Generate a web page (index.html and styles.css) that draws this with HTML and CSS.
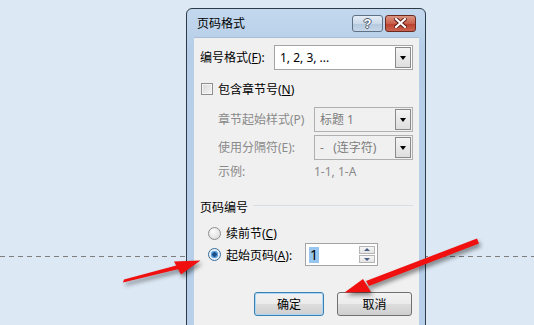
FILE: index.html
```html
<!DOCTYPE html>
<html lang="zh-CN">
<head>
  <meta charset="UTF-8" />
  <title>页码格式</title>
  <link rel="stylesheet" href="styles.css">
</head>
<body>
  <div class="desk">
    <div class="page-break"></div>

    <div class="dialog">
      <div class="titlebar">
        <span class="title">页码格式</span>
        <div class="caption-btns">
          <span class="cap-btn help">?</span>
          <span class="cap-btn close">
            <svg width="13" height="10" viewBox="0 0 13 10">
              <path d="M2 1 L11 9 M11 1 L2 9" stroke="#5a1a14" stroke-width="4" stroke-linecap="square"/>
              <path d="M2 1 L11 9 M11 1 L2 9" stroke="#fff" stroke-width="2.2" stroke-linecap="square"/>
            </svg>
          </span>
        </div>
      </div>

      <div class="panel">
        <div class="fmt-row">
          <span class="lbl">编号格式(<u>F</u>):</span>
          <div class="combo">
            <span class="combo-text">1, 2, 3, ...</span>
            <span class="drop"></span>
          </div>
        </div>

        <div class="check-row">
          <span class="checkbox"></span>
          <span>包含章节号(<u>N</u>)</span>
        </div>

        <div class="chapter">
          <span class="lbl off">章节起始样式(P)</span>
          <div class="combo off"><span class="combo-text">标题 1</span><span class="drop"></span></div>
          <span class="lbl off">使用分隔符(E):</span>
          <div class="combo off"><span class="combo-text">-&nbsp;&nbsp;&nbsp;(连字符)</span><span class="drop"></span></div>
          <span class="lbl off">示例:</span>
          <span class="lbl off sample">1-1, 1-A</span>
        </div>

        <div class="group-head">
          <span>页码编号</span>
          <span class="rule"></span>
        </div>

        <div class="radio-row">
          <span class="radio"></span>
          <span>续前节(<u>C</u>)</span>
        </div>

        <div class="radio-row start">
          <span class="radio on"></span>
          <span class="radio-lbl">起始页码(<u>A</u>):</span>
          <div class="spin">
            <span class="spin-val">1</span>
            <div class="spin-btns">
              <span class="spin-btn up"></span>
              <span class="spin-btn down"></span>
            </div>
          </div>
        </div>

        <div class="actions">
          <button class="btn default">确定</button>
          <button class="btn">取消</button>
        </div>
      </div>
    </div>

    <!-- annotation arrows drawn over the screenshot -->
    <svg class="arrows" width="534" height="325" viewBox="0 0 534 325">
      <g fill="#f01010">
        <path d="M123 282.5 L124 279.5 L180 264.5 L181 268.5 Z"/>
        <path d="M174 261.5 L200.5 260.5 L181 274.5 Z"/>
        <path d="M477 238.5 L479 243.5 L369 286 L366 281 Z"/>
        <path d="M344.5 292.5 L363 279 L371 292 Z"/>
      </g>
    </svg>
  </div>
</body>
</html>
```

FILE: styles.css
```css
body {
  margin: 0;
  background: #dce8f4;
  font-family: "Noto Sans", "Noto Sans CJK SC", sans-serif;
  font-size: 12px;
  color: #000;
}

.desk {
  position: relative;
  width: 534px;
  height: 325px;
  overflow: hidden;
}

.page-break {
  position: absolute;
  left: 0;
  right: 0;
  top: 256px;
  height: 1px;
  background: repeating-linear-gradient(to right, #7d7d7d 0 5px, transparent 5px 9px);
}

/* window */
.dialog {
  position: absolute;
  left: 186px;
  top: 8px;
  width: 240px;
  height: 340px;
  box-sizing: border-box;
  border: 1px solid #2d3a48;
  border-radius: 6px 6px 0 0;
  background: linear-gradient(#c3d8ee, #b6cee8 40px, #b8d0ea);
}

.titlebar {
  height: 28px;
  display: flex;
  align-items: center;
  justify-content: space-between;
  padding: 0 9px 0 10px;
}

.title {
  font-size: 12px;
  line-height: 16px;
  margin-top: 1px;
}

.caption-btns {
  display: flex;
  gap: 2px;
}

.cap-btn {
  width: 31px;
  height: 17px;
  box-sizing: border-box;
  border: 1px solid #5f7285;
  border-radius: 3px;
  display: flex;
  align-items: center;
  justify-content: center;
}

.help {
  background: linear-gradient(#e4edf6, #cbdaea 50%, #b3c8de 51%, #c6d7e8);
  color: #fff;
  font-family: "Liberation Sans", sans-serif;
  font-weight: bold;
  font-size: 13px;
  text-shadow: 1px 0 #4c5c6c, -1px 0 #4c5c6c, 0 1px #4c5c6c, 0 -1px #4c5c6c;
}

.close {
  border-color: #6a2a22;
  background: linear-gradient(#dc9584, #c95f4b 50%, #b8402b 51%, #cb6450);
}

.panel {
  margin: 0 6px 0 7px;
  height: 320px;
  background: #f0f0f0;
  border-top: 1px solid #a9bed4;
  padding: 7px 6px 0 6px;
  box-sizing: border-box;
}

.lbl { line-height: 18px; }
.off { color: #8a8a8a; }

u { text-decoration-thickness: 1px; text-underline-offset: 1px; }

/* combo boxes */
.fmt-row {
  display: grid;
  grid-template-columns: 74px 139px;
  align-items: center;
}

.combo {
  height: 25px;
  box-sizing: border-box;
  border: 1px solid #a4a4a4;
  background: #fff;
  display: flex;
  align-items: center;
  justify-content: space-between;
  padding: 1px;
}

.combo.off {
  background: #f0f0f0;
  border-color: #b0b0b0;
}

.combo-text {
  padding-left: 4px;
  line-height: 18px;
}

.combo.off .combo-text { color: #7c7c7c; }

.drop {
  width: 16px;
  height: 21px;
  box-sizing: border-box;
  border: 1px solid #8a8a8a;
  background: linear-gradient(#f4f4f4, #dedede);
  position: relative;
}

.drop::after {
  content: "";
  position: absolute;
  left: 4px;
  top: 8px;
  border-left: 3.5px solid transparent;
  border-right: 3.5px solid transparent;
  border-top: 4px solid #000;
}

/* checkbox */
.check-row {
  display: flex;
  align-items: center;
  gap: 5px;
  height: 18px;
  margin-top: 10px;
  padding-left: 1px;
}

.checkbox {
  width: 12px;
  height: 12px;
  box-sizing: border-box;
  border: 1px solid #8e8f8f;
  background: linear-gradient(135deg, #d8d8d8, #f6f6f6);
  box-shadow: inset 0 0 0 1px #f4f4f4;
}

.chapter {
  display: grid;
  grid-template-columns: 96px 99px;
  grid-template-rows: 25px 25px 18px;
  row-gap: 3px;
  align-items: center;
  margin-top: 9px;
  padding-left: 18px;
}

/* group */
.group-head {
  display: flex;
  align-items: center;
  gap: 5px;
  height: 18px;
  margin-top: 17px;
}

.rule {
  flex: 1;
  height: 1px;
  background: #d6dde4;
  margin-top: -3px;
}

.radio-row {
  display: flex;
  align-items: center;
  gap: 5px;
  height: 18px;
  margin-top: 8px;
  padding-left: 8px;
}

.radio-row.start {
  height: 23px;
  margin-top: 1px;
}

.radio {
  width: 13px;
  height: 13px;
  box-sizing: border-box;
  border-radius: 50%;
  border: 1px solid #8e8f8f;
  background: radial-gradient(circle at 40% 35%, #fdfdfd, #d4d4d4);
}

.radio.on {
  border-color: #3b6f9e;
  background: radial-gradient(circle, #1a4f8a 0 2px, #5fa3dc 2.5px 3.5px, #e6eef7 4px);
}

.radio-lbl { width: 74px; }

.spin {
  width: 73px;
  height: 23px;
  box-sizing: border-box;
  border: 1px solid #a4a4a4;
  background: #fff;
  display: flex;
  align-items: center;
  justify-content: space-between;
  padding: 2px;
}

.spin-val {
  background: #99c6ee;
  line-height: 16px;
  padding: 0 1px;
  margin-left: 1px;
  font-size: 14px;
}

.spin-btns {
  display: flex;
  flex-direction: column;
  gap: 1px;
}

.spin-btn {
  width: 16px;
  height: 8px;
  box-sizing: border-box;
  border: 1px solid #b5b5b5;
  background: linear-gradient(#f7f7f7, #e3e3e3);
  position: relative;
}

.spin-btn::after {
  content: "";
  position: absolute;
  left: 4px;
  top: 1px;
  border-left: 3px solid transparent;
  border-right: 3px solid transparent;
}

.spin-btn.up::after { border-bottom: 3px solid #4a5f86; }
.spin-btn.down::after { border-top: 3px solid #4a5f86; top: 2px; }

/* buttons */
.actions {
  display: flex;
  justify-content: flex-end;
  gap: 13px;
  margin-top: 26px;
  padding-right: 1px;
}

.btn {
  width: 75px;
  height: 24px;
  box-sizing: border-box;
  border: 1px solid #707070;
  border-radius: 3px;
  background: linear-gradient(#f2f2f2, #ebebeb 50%, #dddddd 51%, #cfcfcf);
  font-family: inherit;
  font-size: 12px;
  padding: 0;
  color: #000;
}

.btn.default {
  width: 70px;
  border-color: #3c7fb1;
  box-shadow: inset 0 0 0 1px #a9d8f4;
}

.arrows {
  position: absolute;
  left: 0;
  top: 0;
  pointer-events: none;
  filter: drop-shadow(2px 3px 2px rgba(0, 0, 0, 0.45));
}
```
